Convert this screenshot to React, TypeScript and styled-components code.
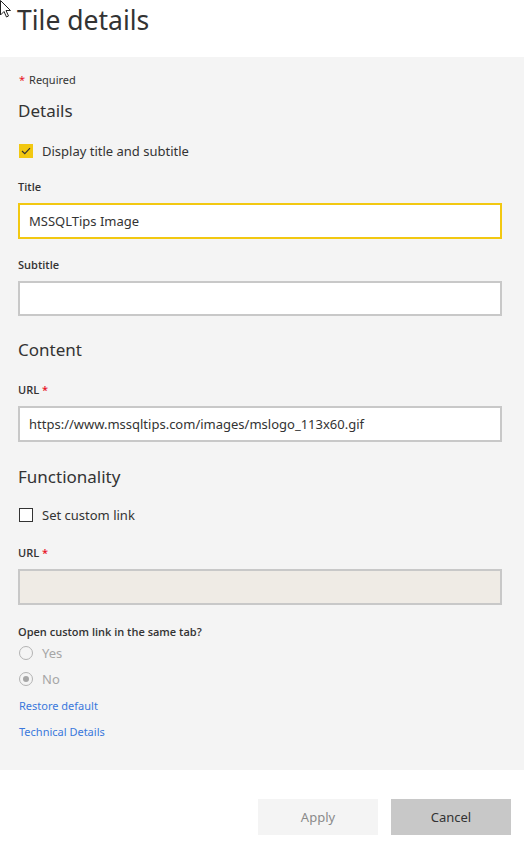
import React, { useState } from "react";
import styled, { createGlobalStyle } from "styled-components";

const GlobalStyle = createGlobalStyle`
  html, body {
    margin: 0;
    padding: 0;
    background: #fff;
  }
  body {
    font-family: "Noto Sans", "Open Sans", sans-serif;
    color: #333;
  }
`;

const Page = styled.div`
  width: 524px;
  height: 868px;
  display: flex;
  flex-direction: column;
  background: #fff;
  position: relative;
  overflow: hidden;
`;

const Header = styled.div`
  height: 57px;
  padding: 0 0 0 17px;
  display: flex;
  align-items: flex-start;
`;

const PageTitle = styled.h1`
  margin: 2px 0 0;
  font-size: 26.5px;
  font-weight: 400;
  color: #333;
`;

const Cursor = styled.svg`
  position: absolute;
  left: 0;
  top: 0;
`;

const Panel = styled.div`
  background: #f4f4f4;
  padding: 15px 22px 30px 18px;
  height: 713px;
  box-sizing: border-box;
  display: flex;
  flex-direction: column;
`;

const Required = styled.div`
  font-size: 11px;
  color: #333;
  line-height: 16px;
  margin-left: 1px;
`;

const Star = styled.span`
  color: #e81123;
  margin-right: 4px;
`;

const SectionTitle = styled.h2<{ $top: number }>`
  margin: ${(p) => p.$top}px 0 0;
  font-size: 17px;
  font-weight: 400;
  color: #333;
  line-height: 24px;
`;

const CheckRow = styled.label<{ $top: number }>`
  display: flex;
  align-items: center;
  gap: 9px;
  margin: ${(p) => p.$top}px 0 0 1px;
  font-size: 13px;
  color: #333;
  height: 18px;
`;

const Box = styled.span<{ $checked?: boolean }>`
  width: 14px;
  height: 14px;
  box-sizing: border-box;
  display: flex;
  align-items: center;
  justify-content: center;
  background: ${(p) => (p.$checked ? "#f2c811" : "#fff")};
  border: ${(p) => (p.$checked ? "none" : "1px solid #333")};
`;

const FieldLabel = styled.div<{ $top: number }>`
  margin-top: ${(p) => p.$top}px;
  font-family: "Open Sans", "Noto Sans", sans-serif;
  font-size: 11px;
  font-weight: 600;
  color: #333;
  line-height: 16px;
`;

const Input = styled.div<{ $focus?: boolean; $disabled?: boolean }>`
  margin-top: 8px;
  height: 38px;
  box-sizing: border-box;
  border: ${(p) => (p.$focus ? "2px solid #f2c811" : "2px solid #c8c8c8")};
  background: ${(p) => (p.$disabled ? "#efebe5" : "#fff")};
  display: flex;
  align-items: center;
  padding-left: 9px;
  font-size: 13px;
  color: #333;
`;

const Question = styled.div`
  margin-top: 19px;
  font-family: "Open Sans", "Noto Sans", sans-serif;
  font-size: 11px;
  font-weight: 600;
  color: #333;
  line-height: 16px;
`;

const RadioRow = styled.div<{ $top: number }>`
  display: flex;
  align-items: center;
  gap: 9px;
  margin-top: ${(p) => p.$top}px;
  margin-left: 1px;
  font-size: 13px;
  color: #a6a6a6;
  height: 20px;
`;

const Radio = styled.span<{ $on?: boolean }>`
  width: 14px;
  height: 14px;
  box-sizing: border-box;
  border-radius: 50%;
  border: 1px solid #b3b3b3;
  display: flex;
  align-items: center;
  justify-content: center;
  &::after {
    content: "";
    display: ${(p) => (p.$on ? "block" : "none")};
    width: 6px;
    height: 6px;
    border-radius: 50%;
    background: #a6a6a6;
  }
`;

const Link = styled.a<{ $top: number }>`
  margin-top: ${(p) => p.$top}px;
  font-size: 11px;
  color: #3a78dc;
  text-decoration: none;
  line-height: 16px;
  cursor: pointer;
  align-self: flex-start;
  margin-left: 1px;
`;

const Footer = styled.div`
  display: flex;
  justify-content: flex-end;
  gap: 13px;
  padding: 29px 13px 0 0;
`;

const Button = styled.button<{ $primary?: boolean }>`
  width: 120px;
  height: 36px;
  border: none;
  font-family: inherit;
  font-size: 13px;
  background: ${(p) => (p.$primary ? "#f4f4f4" : "#c8c8c8")};
  color: ${(p) => (p.$primary ? "#8a8a8a" : "#333")};
  cursor: pointer;
`;

export default function App() {
  const [display, setDisplay] = useState(true);
  const [custom, setCustom] = useState(false);

  return (
    <Page>
      <GlobalStyle />
      <Cursor width="12" height="20" viewBox="0 0 12 20">
        <path d="M0.5 0.5 L0.5 15 L4 11.5 L6.5 17 L8.5 16 L6 10.5 L10.5 10.5 Z" fill="#fff" stroke="#222" strokeWidth="1" />
      </Cursor>
      <Header>
        <PageTitle>Tile details</PageTitle>
      </Header>
      <Panel>
        <Required>
          <Star>*</Star>Required
        </Required>
        <SectionTitle $top={11}>Details</SectionTitle>
        <CheckRow $top={19} onClick={() => setDisplay(!display)}>
          <Box $checked={display}>
            {display && (
              <svg width="10" height="8" viewBox="0 0 10 8">
                <path d="M1 4 L3.8 6.6 L9 1.2" fill="none" stroke="#333" strokeWidth="1.2" />
              </svg>
            )}
          </Box>
          Display title and subtitle
        </CheckRow>
        <FieldLabel $top={19}>Title</FieldLabel>
        <Input $focus>MSSQLTips Image</Input>
        <FieldLabel $top={18}>Subtitle</FieldLabel>
        <Input />
        <SectionTitle $top={22}>Content</SectionTitle>
        <FieldLabel $top={20}>
          URL <Star>*</Star>
        </FieldLabel>
        <Input>https://www.mssqltips.com/images/mslogo_113x60.gif</Input>
        <SectionTitle $top={23}>Functionality</SectionTitle>
        <CheckRow $top={17} onClick={() => setCustom(!custom)}>
          <Box $checked={custom} />
          Set custom link
        </CheckRow>
        <FieldLabel $top={21}>
          URL <Star>*</Star>
        </FieldLabel>
        <Input $disabled />
        <Question>Open custom link in the same tab?</Question>
        <RadioRow $top={4}>
          <Radio />
          Yes
        </RadioRow>
        <RadioRow $top={7}>
          <Radio $on />
          No
        </RadioRow>
        <Link $top={10}>Restore default</Link>
        <Link $top={10}>Technical Details</Link>
      </Panel>
      <Footer>
        <Button $primary>Apply</Button>
        <Button>Cancel</Button>
      </Footer>
    </Page>
  );
}
